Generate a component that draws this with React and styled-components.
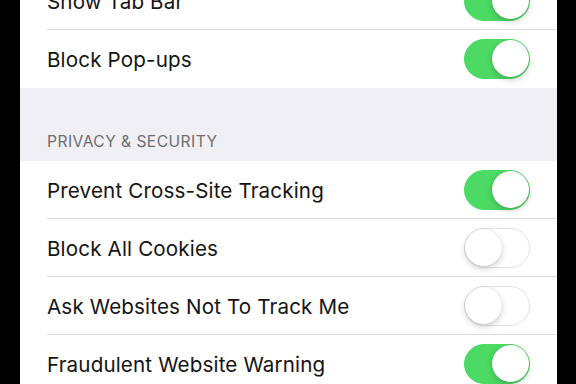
import React from "react";
import styled, { createGlobalStyle } from "styled-components";

const Global = createGlobalStyle`
  html, body { margin: 0; padding: 0; background: #000; }
  body { width: 576px; height: 384px; overflow: hidden; }
`;

const Frame = styled.div`
  display: flex;
  width: 576px;
  height: 384px;
  background: #000;
  padding: 0 19px 0 20px;
  box-sizing: border-box;
`;

const Screen = styled.div`
  flex: 1;
  height: 384px;
  overflow: hidden;
  background: #efeff4;
  font-family: Inter, "Liberation Sans", sans-serif;
`;

const Group = styled.div`
  background: #fff;
  margin-top: ${(p) => p.$offset || 0}px;
`;

const Row = styled.div`
  height: 58px;
  display: flex;
  align-items: center;
  justify-content: space-between;
  padding: 0 27px 0 27px;
  position: relative;
  &:not(:last-child)::after {
    content: "";
    position: absolute;
    left: 27px;
    right: 0;
    bottom: 0;
    height: 1px;
    background: #dcdce0;
  }
`;

const Label = styled.span`
  font-size: 20.6px;
  color: #141414;
  letter-spacing: 0.15px;
  padding-top: 1px;
`;

const Header = styled.div`
  height: 73px;
  box-sizing: border-box;
  padding: 0 27px 10px;
  display: flex;
  align-items: flex-end;
  font-size: 15.6px;
  color: #6d6d72;
  letter-spacing: 0.45px;
`;

const Track = styled.div`
  width: 66px;
  height: 40px;
  border-radius: 20px;
  box-sizing: border-box;
  position: relative;
  background: ${(p) => (p.$on ? "#4cd964" : "#fff")};
  border: 1.5px solid ${(p) => (p.$on ? "#4cd964" : "#e3e3e6")};
`;

const Knob = styled.div`
  position: absolute;
  top: 0;
  ${(p) => (p.$on ? "right: 0;" : "left: 0;")}
  width: 37px;
  height: 37px;
  border-radius: 50%;
  background: #fff;
  box-shadow: 0 3px 6px rgba(0, 0, 0, 0.18), 0 0 0 0.5px rgba(0, 0, 0, 0.08);
`;

const Toggle = ({ on }) => (
  <Track $on={on}>
    <Knob $on={on} />
  </Track>
);

const general = [
  { label: "Show Tab Bar", on: true },
  { label: "Block Pop-ups", on: true },
];

const privacy = [
  { label: "Prevent Cross-Site Tracking", on: true },
  { label: "Block All Cookies", on: false },
  { label: "Ask Websites Not To Track Me", on: false },
  { label: "Fraudulent Website Warning", on: true },
];

export default function App() {
  return (
    <>
      <Global />
      <Frame>
        <Screen>
          <Group $offset={-28}>
            {general.map((r) => (
              <Row key={r.label}>
                <Label>{r.label}</Label>
                <Toggle on={r.on} />
              </Row>
            ))}
          </Group>
          <Header>PRIVACY &amp; SECURITY</Header>
          <Group>
            {privacy.map((r) => (
              <Row key={r.label}>
                <Label>{r.label}</Label>
                <Toggle on={r.on} />
              </Row>
            ))}
          </Group>
        </Screen>
      </Frame>
    </>
  );
}
